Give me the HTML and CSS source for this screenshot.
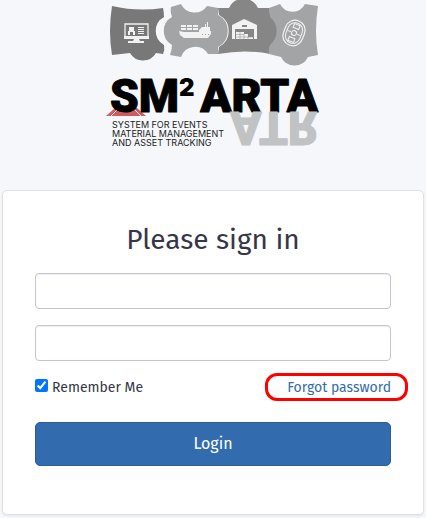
FILE: index.html
```html
<!DOCTYPE html>
<html lang="en">
<head>
<meta charset="utf-8">
<meta name="viewport" content="width=device-width, initial-scale=1">
<title>Sign in</title>
<link rel="stylesheet" href="styles.css">
</head>
<body>
<header class="brand">
<svg class="logo" viewBox="0 0 214 150" role="img" aria-label="SM2ARTA">
  <!-- jigsaw pieces -->
  <path fill="#787879" d="M6 6Q32 12 57 8Q58 12 58 17A16 16 0 0 0 58 45Q59 50 57 54L50 53A15 15 0 0 1 24 53L6 55Q2 31 6 6Z"/>
  <path fill="#a3a4a6" d="M65 7L75 4A15 15 0 0 0 101 6L112 8V15A18 18 0 0 1 112 47V54L102 54A15 15 0 0 0 75 57L64 55Q66 49 66 45A16 16 0 0 1 66 17Q64 11 65 7Z"/>
  <path fill="#868686" d="M112 8L123 8A16 16 0 0 1 152 8L164 8Q163 12 165 17A18 18 0 0 1 165 45Q162 50 164 54Q140 49 112 54L113 47A18 18 0 0 0 113 15Z"/>
  <path fill="#a3a4a6" d="M163 8L174 4A14 14 0 0 0 199 4L212 6Q208 31 212 55L202 57A15 15 0 0 1 175 57L163 54Q162 49 164 45A18 18 0 0 0 164 17Z"/>
  <!-- monitor -->
  <path fill="none" stroke="#f2f2f2" stroke-width="1.3" d="M19 24H42V38H19Z"/>
  <path fill="#f2f2f2" d="M18 36H43V39H18ZM28 39H33L34 41H38V43H22V41H27ZM23 27H28V31H29V35H27V32H24V35H22V31H23ZM32 27H38V28H32ZM32 29H38V30H32ZM32 31H38V32H32ZM32 33H38V34H32Z"/>
  <!-- ship -->
  <path fill="#f2f2f2" d="M73 31L78 32H93V30L96 27H99V24H100V27H101V22H102V27H104V31H105V34L102 38H78L74 35ZM75 25H80V27H75ZM81 25H86V27H81ZM87 25H92V27H87ZM75 28H80V30H75ZM81 28H86V30H81ZM87 28H92V30H87Z"/>
  <path fill="#a3a4a6" d="M96 34H97V35H96ZM99 34H100V35H99ZM102 34H103V35H102Z"/>
  <!-- warehouse -->
  <path fill="#f2f2f2" fill-rule="evenodd" d="M126 25L138 19L151 25V39H148V29H129V39H126ZM136 25V27H141V25ZM130 32H138V34H142V37H147V39H130Z"/>
  <path fill="none" stroke="#868686" stroke-width=".5" d="M130 34.500H138M130 37H147M134 32V39M138 34V39M142 37V39"/>
  <!-- event badge -->
  <g fill="none" stroke="#f2f2f2" transform="rotate(22 188 33)">
    <rect x="178" y="20" width="20" height="26" rx="10" stroke-width="1.200"/>
    <rect x="180.500" y="22.500" width="15" height="21" rx="7.500"/>
    <path d="M181 33H185M191 33H195M185 24V28H191V24ZM185 42V38H191V42Z"/>
    <circle cx="188" cy="33" r="2.500"/>
  </g>
  <path fill="#d25b5e" d="M0 116L9 108H31L40 116Z"/>
  <path fill="none" stroke="#f5f7fa" d="M5 116L12 109M35 116L28 109"/>
  <text class="word" x="4" y="112">SM</text>
  <text class="power" x="73" y="96">2</text>
  <text class="word" text-anchor="end" x="212" y="112">ARTA</text>
  <text class="word reflection" text-anchor="end" transform="translate(0 224) scale(1 -1)" x="212" y="112">ATR</text>
  <text class="tagline" x="6" y="128">SYSTEM FOR EVENTS</text>
  <text class="tagline" x="6" y="137">MATERIAL MANAGEMENT</text>
  <text class="tagline" x="6" y="146">AND ASSET TRACKING</text>
</svg>
</header>
<main class="card">
<h1 class="title">Please sign in</h1>
<form>
  <input class="field" type="text" name="username" aria-label="Username">
  <input class="field" type="password" name="password" aria-label="Password">
  <div class="options">
    <label class="remember"><input class="check" type="checkbox" checked>Remember Me</label>
    <a class="forgot" href="#">Forgot password</a>
  </div>
  <button class="login" type="submit">Login</button>
</form>
</main>
</body>
</html>
```
FILE: styles.css
```css
* { box-sizing: border-box; }
body {
  margin: 0;
  background: #f5f7fa;
  color: #363647;
  font: 14px/21px "Fira Sans", "Noto Sans", sans-serif;
}
.brand { display: flex; justify-content: center; height: 190px; }
.logo { width: 214px; height: 150px; overflow: visible; }
.word { font: 900 46px "Roboto", sans-serif; stroke: #000; stroke-width: 1px; stroke-linejoin: round; }
.power { font: 900 24px "Inter", sans-serif; }
.reflection { fill: #c1c2c4; stroke: #c1c2c4; }
.tagline { font: 9px "Inter", sans-serif; fill: #222; }
.card {
  margin: 0 2px 3px;
  padding: 32px;
  padding-bottom: 48px;
  border: 1px solid #dfe1e5;
  border-radius: 5px;
  background: #fff;
  box-shadow: 0 1px 2px rgba(0, 0, 0, .08);
}
.title {
  margin: 0 0 16px;
  font-size: 28px;
  line-height: 34px;
  font-weight: 400;
  text-align: center;
}
.field {
  display: block;
  width: 100%;
  height: 36px;
  margin-bottom: 16px;
  padding: 6px 12px;
  border: 1px solid #c4c4d4;
  border-radius: 4px;
  background: #fff;
  box-shadow: inset 0 1px 1px rgba(0, 0, 0, .07);
  font: inherit;
}
.options { display: flex; justify-content: space-between; margin-bottom: 24px; }
.remember { display: flex; gap: 4px; }
.check { width: 13px; height: 13px; margin: 2px 0 0; accent-color: #0075ff; }
.forgot { position: relative; color: #336cae; text-decoration: none; }
.forgot::after {
  content: "";
  position: absolute;
  inset: -4px -17px -3px -22px;
  border: 3px solid #f00;
  border-radius: 12px;
}
.login {
  display: block;
  width: 100%;
  height: 44px;
  border: 1px solid #2b5c95;
  border-radius: 5px;
  background: #336cae;
  color: #fff;
  font: 16px/24px "Fira Sans", "Noto Sans", sans-serif;
}
```
